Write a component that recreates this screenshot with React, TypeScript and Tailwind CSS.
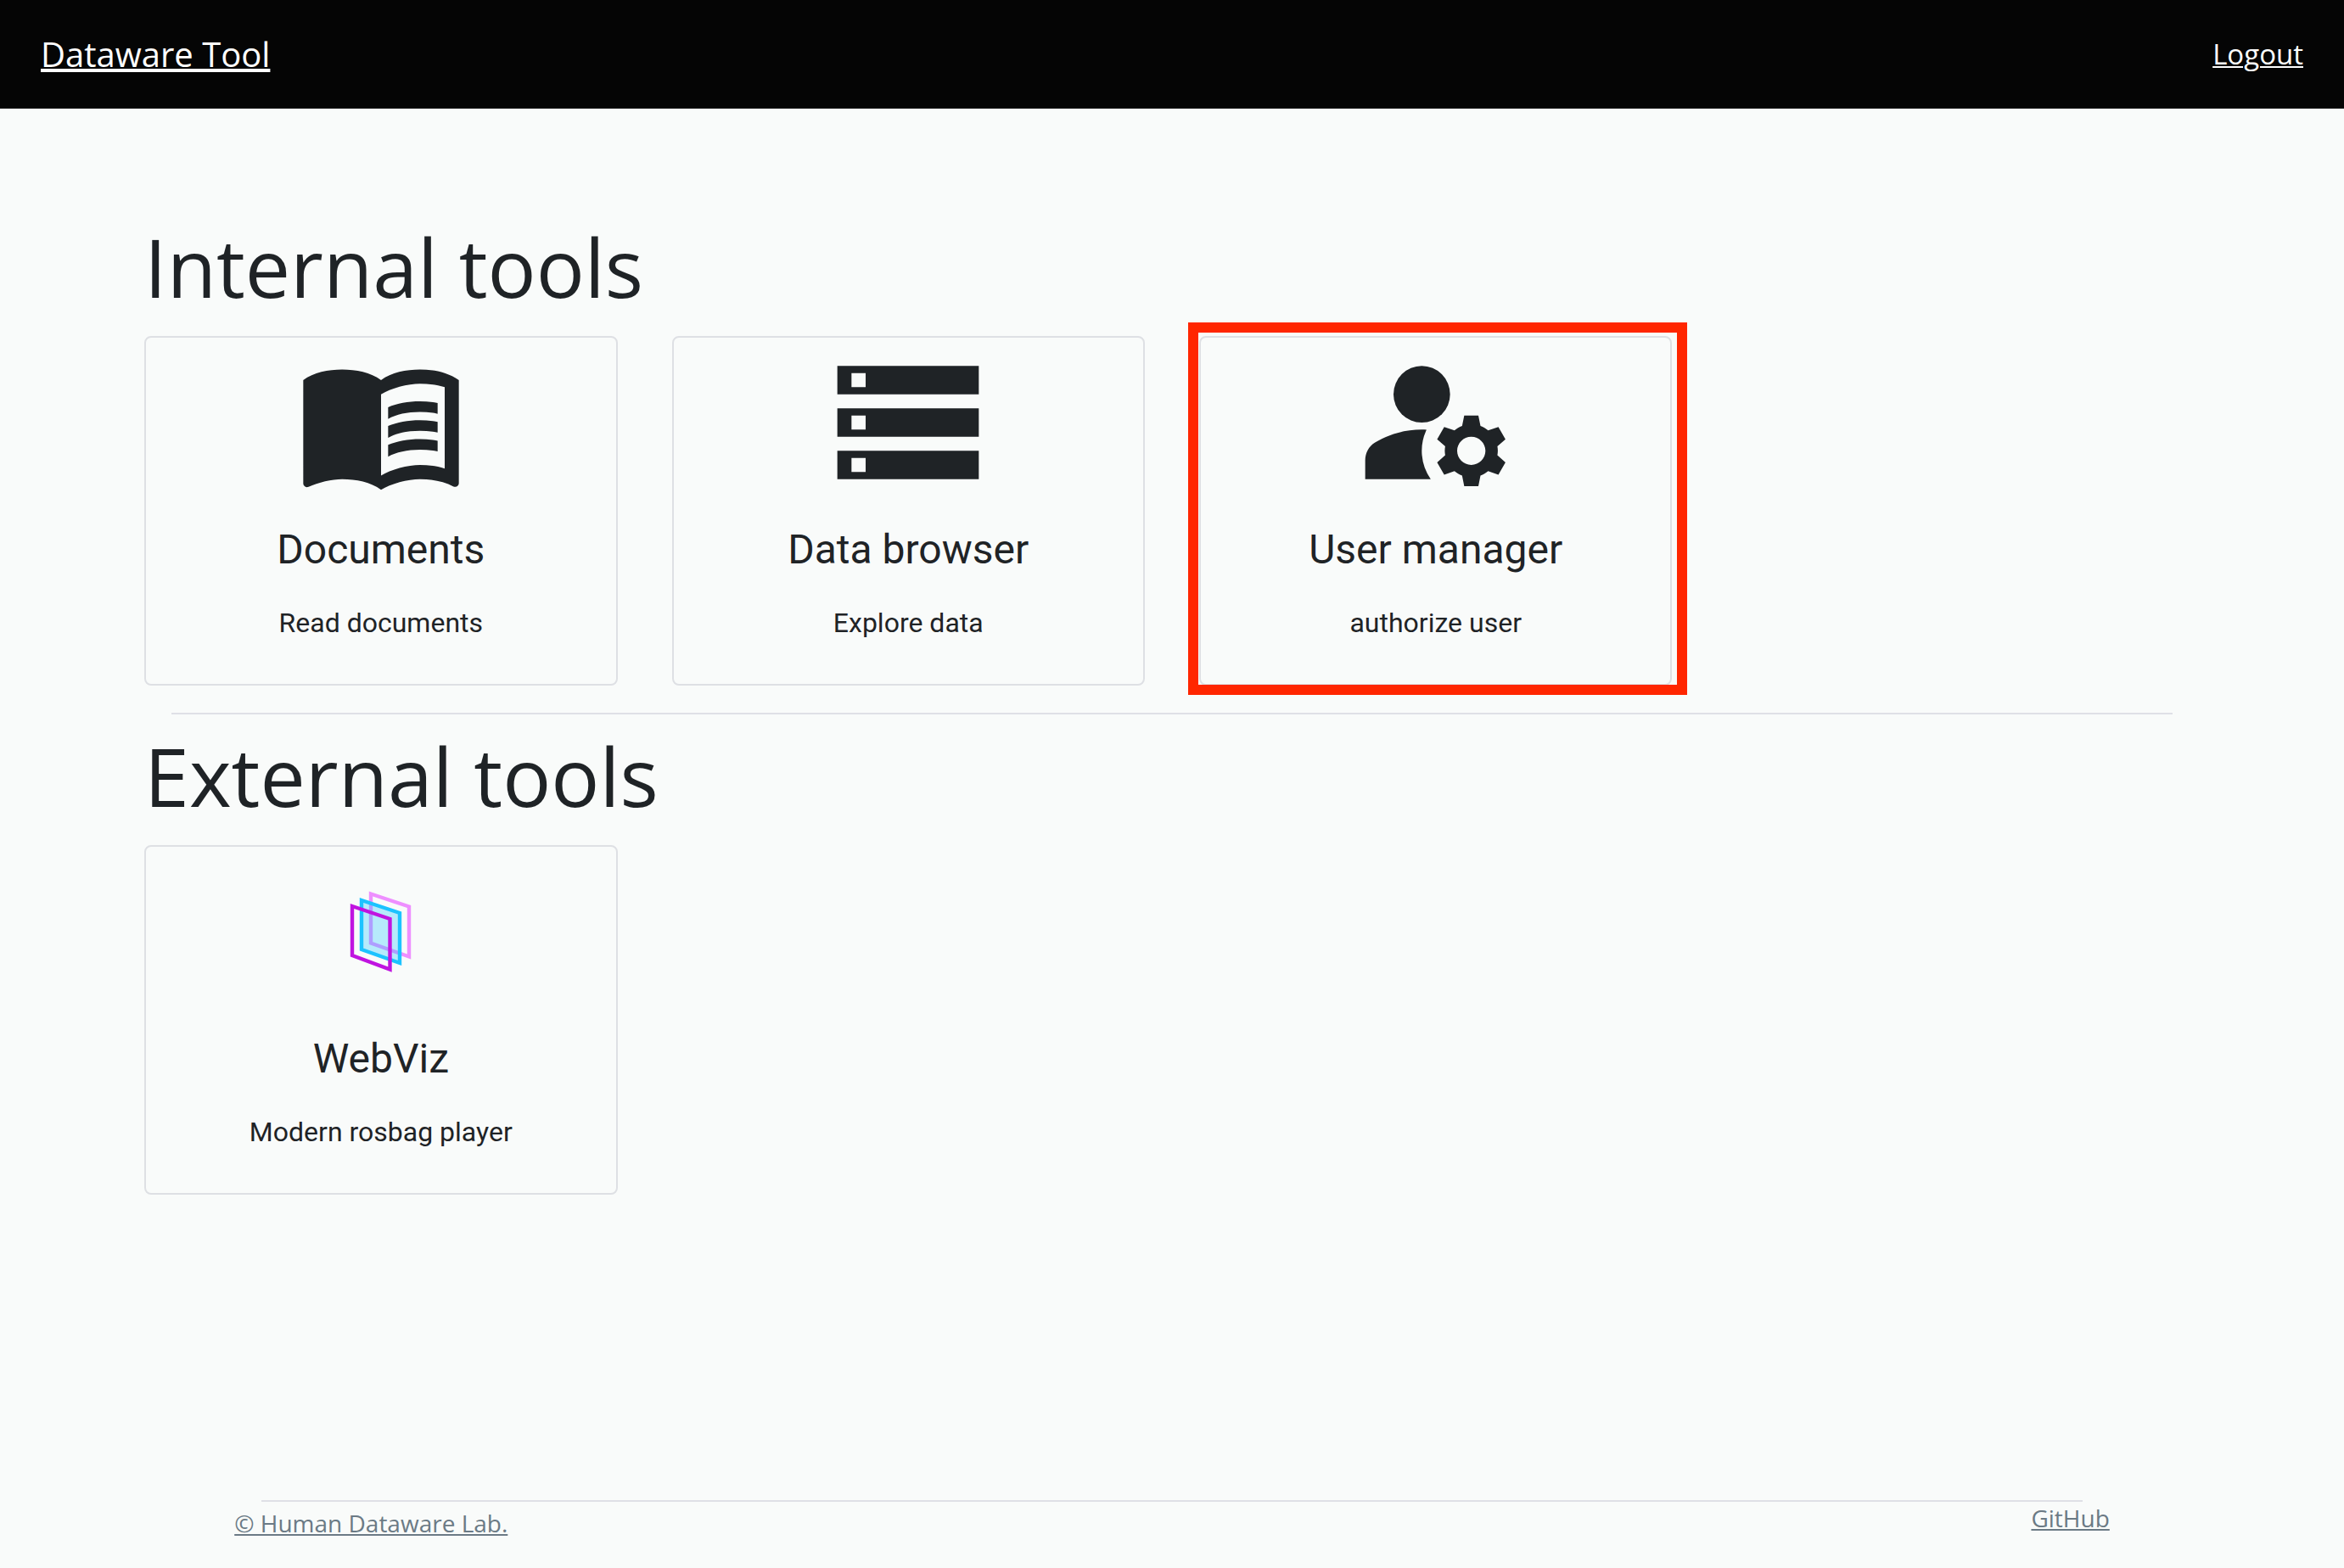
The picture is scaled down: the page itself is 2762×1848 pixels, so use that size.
import type { ReactNode } from "react";
import { MdManageAccounts, MdMenuBook, MdStorage } from "react-icons/md";

type Tool = {
  title: string;
  description: string;
  icon: ReactNode;
  highlighted?: boolean;
};

function WebVizLogo() {
  return (
    <svg viewBox="-31 -22 200 200" className="size-[200px]" fill="none" strokeWidth="4.4" aria-hidden="true">
      <path d="M57 33.500L102 48.500V107.500L57 91.500Z" stroke="#ee8fff" />
      <path d="M46 41L91 56V115L46 99Z" fill="#1cc3ff" fillOpacity="0.3" stroke="#1cc3ff" />
      <path d="M35 48L79.500 63V122.500L35 106Z" stroke="#c014e0" />
    </svg>
  );
}

const internalTools: Tool[] = [
  { title: "Documents", description: "Read documents", icon: <MdMenuBook className="size-[200px]" /> },
  { title: "Data browser", description: "Explore data", icon: <MdStorage className="size-[200px]" /> },
  {
    title: "User manager",
    description: "authorize user",
    icon: <MdManageAccounts className="size-[200px]" />,
    highlighted: true,
  },
];

const externalTools: Tool[] = [
  { title: "WebViz", description: "Modern rosbag player", icon: <WebVizLogo /> },
];

function ToolCard({ title, description, icon, highlighted }: Tool) {
  return (
    <a
      href="#"
      className="relative flex flex-col items-center rounded-lg border-2 border-[#dee0e4] pb-12 text-center font-[Roboto,sans-serif]"
    >
      {icon}
      <h2 className="mt-[18px] mb-[30px] text-[48px] leading-[64px]">{title}</h2>
      <p className="text-[32px] leading-[48px]">{description}</p>
      {highlighted && (
        <span className="pointer-events-none absolute -top-[18px] -right-5 -bottom-[13px] -left-[15px] border-12 border-[#ff2600]" />
      )}
    </a>
  );
}

function ToolSection({ heading, tools }: { heading: string; tools: Tool[] }) {
  return (
    <section>
      <h1 className="mb-[30px] text-[95px] leading-[104px]">{heading}</h1>
      <div className="grid grid-cols-4 gap-16">
        {tools.map((tool) => (
          <ToolCard key={tool.title} {...tool} />
        ))}
      </div>
    </section>
  );
}

export default function App() {
  return (
    <div className="flex min-h-screen flex-col bg-[#f9fbfa] font-['Open_Sans',sans-serif] text-[#1f2326]">
      <header className="flex h-32 items-center justify-between bg-[#050505] px-12 text-white">
        <a href="#" className="text-[40px] leading-[56px] underline decoration-4 underline-offset-2">
          Dataware Tool
        </a>
        <a href="#" className="text-[33px] leading-[48px] underline decoration-2 underline-offset-2">
          Logout
        </a>
      </header>

      <main className="mx-auto w-[90%] flex-1 px-8 pt-[134px]">
        <ToolSection heading="Internal tools" tools={internalTools} />
        <hr className="mx-8 mt-8 mb-5 border-t-2 border-[#dfe0e6]" />
        <ToolSection heading="External tools" tools={externalTools} />
      </main>

      <footer className="mx-auto w-[80%] pb-[34px]">
        <hr className="mx-8 border-t-2 border-[#dfe0e6]" />
        <div className="flex items-start justify-between text-[28px] leading-[38px] text-[#6b7a85]">
          <a href="#" className="mt-1.5 underline decoration-2 underline-offset-2">
            © Human Dataware Lab.
          </a>
          <a href="#" className="underline decoration-2 underline-offset-2">
            GitHub
          </a>
        </div>
      </footer>
    </div>
  );
}
